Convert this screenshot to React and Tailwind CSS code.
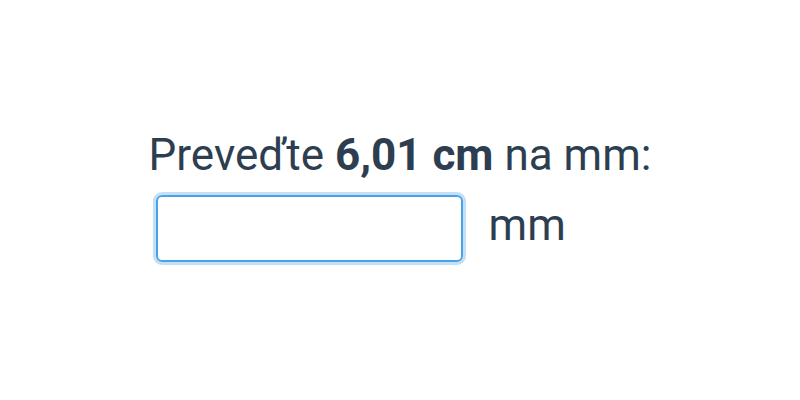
export default function App() {
  return (
    <div className="w-screen h-[400px] bg-white flex items-center justify-center font-['Roboto',sans-serif] text-[#2c3e50]">
      <div className="flex flex-col pb-[5px]">
        <p className="text-[44px] leading-[44px]">
          Preveďte <b className="font-bold">6,01 cm</b> na mm:
        </p>
        <div className="flex items-center mt-[18px] ml-[7px]">
          <input
            type="text"
            className="w-[307px] h-[67px] border-2 border-[#4aa3e6] rounded-[6px] shadow-[0_0_0_3px_#c3e0f6] outline-none px-3 text-[36px]"
          />
          <span className="text-[44px] leading-[44px] ml-[26px] mb-[7px]">mm</span>
        </div>
      </div>
    </div>
  );
}
